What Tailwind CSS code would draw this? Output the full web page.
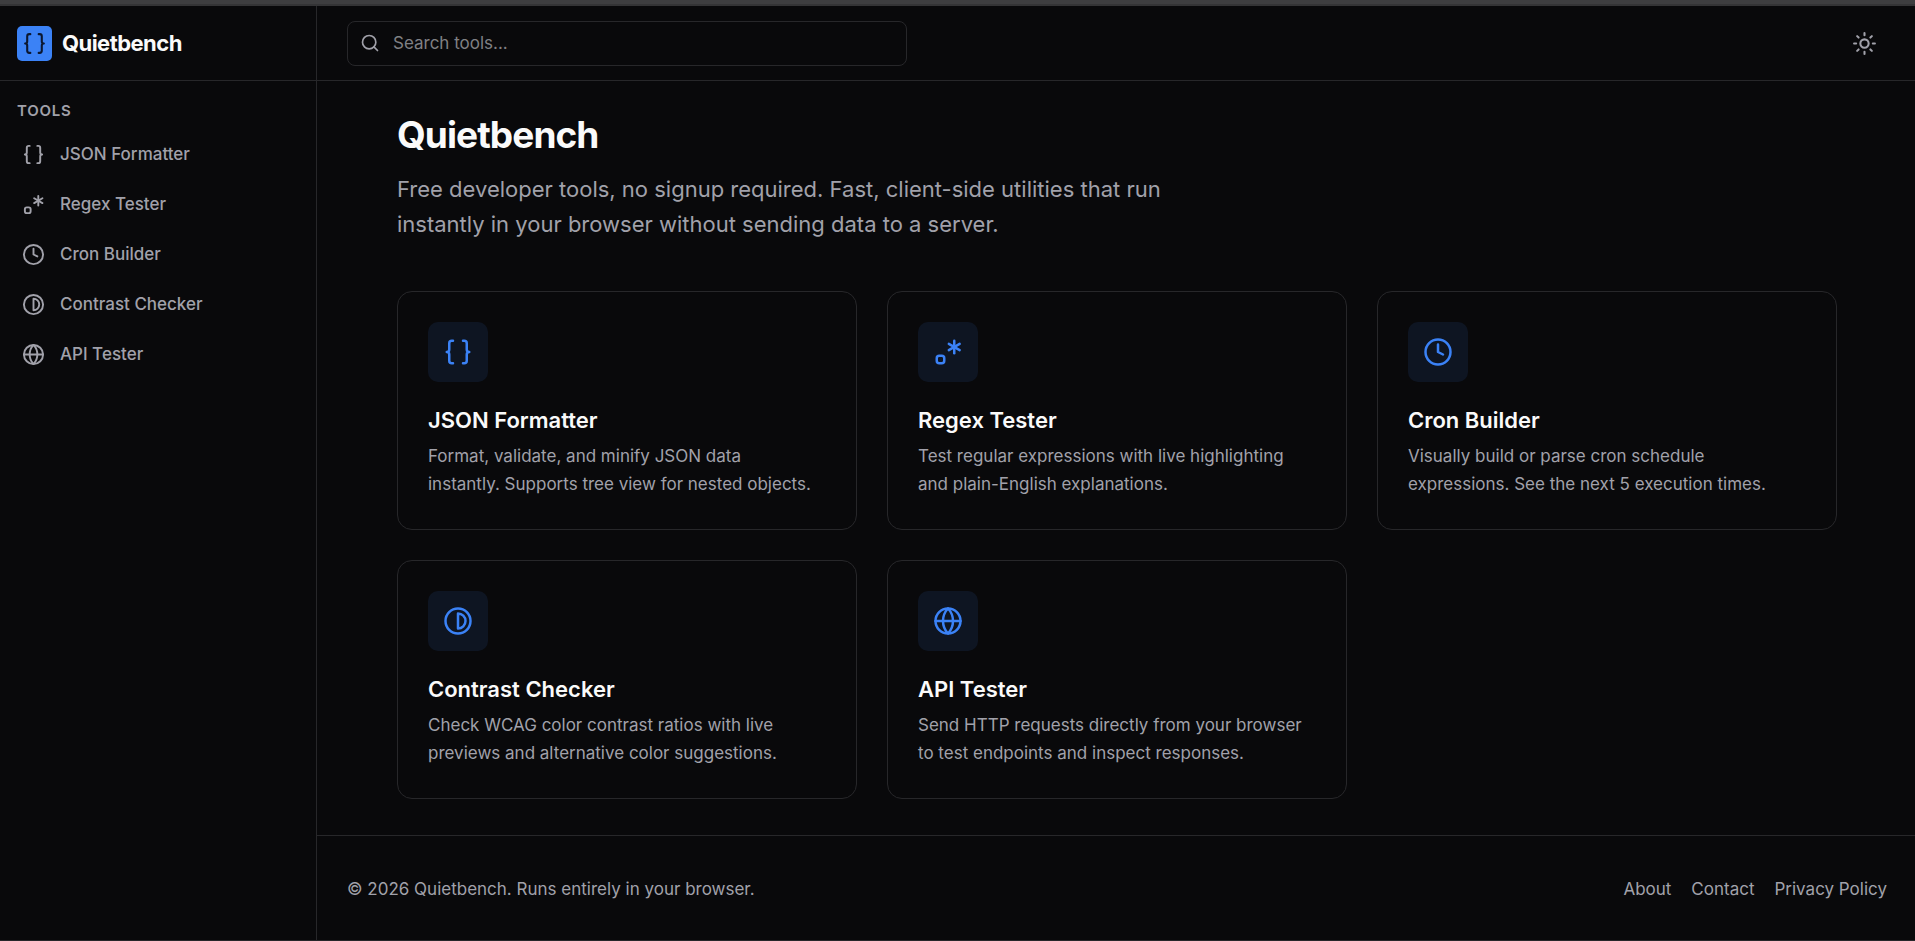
<!DOCTYPE html>
<html lang="en">
<head>
    <meta charset="UTF-8">
    <meta name="viewport" content="width=device-width, initial-scale=1.0">
    <title>Quietbench</title>
    <script src="https://cdn.jsdelivr.net/npm/@tailwindcss/browser@4"></script>
</head>
<body class="min-h-screen flex flex-col bg-[#09090b] text-[#fafafa] text-[17px] leading-[28px] font-['Inter',sans-serif] border-b border-[#27272a]">
    <!-- Icon sprite -->
    <svg class="hidden" fill="none">
        <symbol id="braces" viewBox="0 0 24 24">
            <path d="M8 3H7a2 2 0 0 0-2 2v5a2 2 0 0 1-2 2 2 2 0 0 1 2 2v5c0 1.1.9 2 2 2h1"/>
            <path d="M16 21h1a2 2 0 0 0 2-2v-5c0-1.1.9-2 2-2a2 2 0 0 1-2-2V5a2 2 0 0 0-2-2h-1"/>
        </symbol>
        <symbol id="regex" viewBox="0 0 24 24">
            <path d="M17 3v10"/>
            <path d="m12.67 5.5 8.66 5"/>
            <path d="m12.67 10.5 8.66-5"/>
            <path d="M9 17a2 2 0 0 0-2-2H5a2 2 0 0 0-2 2v2a2 2 0 0 0 2 2h2a2 2 0 0 0 2-2v-2z"/>
        </symbol>
        <symbol id="clock" viewBox="0 0 24 24">
            <circle cx="12" cy="12" r="10"/>
            <path d="M12 6v6l4 2"/>
        </symbol>
        <symbol id="contrast" viewBox="0 0 24 24">
            <circle cx="12" cy="12" r="10"/>
            <path d="M12 18a6 6 0 0 0 0-12v12z"/>
        </symbol>
        <symbol id="globe" viewBox="0 0 24 24">
            <circle cx="12" cy="12" r="10"/>
            <path d="M12 2a14.5 14.5 0 0 0 0 20 14.5 14.5 0 0 0 0-20"/>
            <path d="M2 12h20"/>
        </symbol>
        <symbol id="search" viewBox="0 0 24 24">
            <circle cx="11" cy="11" r="8"/>
            <path d="m21 21-4.3-4.3"/>
        </symbol>
        <symbol id="sun" viewBox="0 0 24 24">
            <circle cx="12" cy="12" r="4"/>
            <path d="M12 2v2"/>
            <path d="M12 20v2"/>
            <path d="m4.93 4.93 1.41 1.41"/>
            <path d="m17.66 17.66 1.41 1.41"/>
            <path d="M2 12h2"/>
            <path d="M20 12h2"/>
            <path d="m6.34 17.66-1.41 1.41"/>
            <path d="m19.07 4.93-1.41 1.41"/>
        </symbol>
    </svg>

    <!-- Window edge -->
    <div class="h-[6px] shrink-0 bg-[#3e3e40] border-b-2 border-[#343436]"></div>

    <div class="flex flex-1">
        <!-- Sidebar -->
        <aside class="w-[317px] shrink-0 border-r border-[#27272a]">
            <div class="h-[75px] border-b border-[#27272a] px-[17px] flex items-center">
                <a href="#" class="flex items-center gap-[10px]">
                    <span class="size-[35px] rounded-[5px] bg-[#3b82f6] text-[#0b1730] flex items-center justify-center">
                        <svg class="size-[25px]" fill="none" stroke="currentColor" stroke-width="2" stroke-linecap="round" stroke-linejoin="round"><use href="#braces"/></svg>
                    </span>
                    <span class="text-[22px] font-bold tracking-tight">Quietbench</span>
                </a>
            </div>
            <nav class="pt-[17px]">
                <h2 class="px-[17px] text-[15px] leading-[25px] font-semibold tracking-wider text-[#a1a1aa]">TOOLS</h2>
                <ul class="mt-[6px] px-[10px] font-medium text-[#a1a1aa]">
                    <li><a href="#json" class="h-[50px] px-3 flex items-center gap-[15px]"><svg class="size-[23px]" fill="none" stroke="currentColor" stroke-width="2" stroke-linecap="round" stroke-linejoin="round"><use href="#braces"/></svg>JSON Formatter</a></li>
                    <li><a href="#regex-tester" class="h-[50px] px-3 flex items-center gap-[15px]"><svg class="size-[23px]" fill="none" stroke="currentColor" stroke-width="2" stroke-linecap="round" stroke-linejoin="round"><use href="#regex"/></svg>Regex Tester</a></li>
                    <li><a href="#cron" class="h-[50px] px-3 flex items-center gap-[15px]"><svg class="size-[23px]" fill="none" stroke="currentColor" stroke-width="2" stroke-linecap="round" stroke-linejoin="round"><use href="#clock"/></svg>Cron Builder</a></li>
                    <li><a href="#contrast-checker" class="h-[50px] px-3 flex items-center gap-[15px]"><svg class="size-[23px]" fill="none" stroke="currentColor" stroke-width="2" stroke-linecap="round" stroke-linejoin="round"><use href="#contrast"/></svg>Contrast Checker</a></li>
                    <li><a href="#api" class="h-[50px] px-3 flex items-center gap-[15px]"><svg class="size-[23px]" fill="none" stroke="currentColor" stroke-width="2" stroke-linecap="round" stroke-linejoin="round"><use href="#globe"/></svg>API Tester</a></li>
                </ul>
            </nav>
        </aside>

        <div class="flex-1 min-w-0 flex flex-col">
            <!-- Top bar -->
            <header class="h-[75px] border-b border-[#27272a] pl-[30px] pr-[28px] flex items-center justify-between gap-6">
                <label class="w-full max-w-[560px] h-[45px] border border-[#27272a] rounded-lg px-3 flex items-center gap-[13px]">
                    <svg class="size-[20px] shrink-0 text-[#a1a1aa]" fill="none" stroke="currentColor" stroke-width="2" stroke-linecap="round" stroke-linejoin="round"><use href="#search"/></svg>
                    <input type="search" aria-label="Search tools" placeholder="Search tools..." class="flex-1 min-w-0 bg-transparent outline-none placeholder:text-[#808084]">
                </label>
                <button type="button" aria-label="Toggle theme" class="size-[45px] rounded-lg text-[#a1a1aa] flex items-center justify-center">
                    <svg class="size-[25px]" fill="none" stroke="currentColor" stroke-width="2" stroke-linecap="round" stroke-linejoin="round"><use href="#sun"/></svg>
                </button>
            </header>

            <main class="flex-1 pt-[31px] pb-9 pl-20 pr-[78px]">
                <h1 class="text-[37px] leading-[45px] font-bold tracking-tight">Quietbench</h1>
                <p class="mt-[15px] mb-[49px] max-w-[840px] text-[22px] leading-[35px] text-[#a1a1aa]">Free developer tools, no signup required. Fast, client-side utilities that run instantly in your browser without sending data to a server.</p>

                <!-- Tool cards -->
                <div class="grid grid-cols-3 gap-[30px]">
                    <a href="#json" class="border border-[#27272a] rounded-[15px] p-[30px] pb-[31px]">
                        <span class="size-[60px] rounded-[10px] bg-[#3b82f6]/10 text-[#3b82f6] flex items-center justify-center">
                            <svg class="size-[30px]" fill="none" stroke="currentColor" stroke-width="2" stroke-linecap="round" stroke-linejoin="round"><use href="#braces"/></svg>
                        </span>
                        <h3 class="mt-[21px] text-[22px] leading-[35px] font-semibold">JSON Formatter</h3>
                        <p class="mt-1 text-[#a1a1aa]">Format, validate, and minify JSON data<br>instantly. Supports tree view for nested objects.</p>
                    </a>
                    <a href="#regex-tester" class="border border-[#27272a] rounded-[15px] p-[30px] pb-[31px]">
                        <span class="size-[60px] rounded-[10px] bg-[#3b82f6]/10 text-[#3b82f6] flex items-center justify-center">
                            <svg class="size-[30px]" fill="none" stroke="currentColor" stroke-width="2" stroke-linecap="round" stroke-linejoin="round"><use href="#regex"/></svg>
                        </span>
                        <h3 class="mt-[21px] text-[22px] leading-[35px] font-semibold">Regex Tester</h3>
                        <p class="mt-1 text-[#a1a1aa]">Test regular expressions with live highlighting and plain-English explanations.</p>
                    </a>
                    <a href="#cron" class="border border-[#27272a] rounded-[15px] p-[30px] pb-[31px]">
                        <span class="size-[60px] rounded-[10px] bg-[#3b82f6]/10 text-[#3b82f6] flex items-center justify-center">
                            <svg class="size-[30px]" fill="none" stroke="currentColor" stroke-width="2" stroke-linecap="round" stroke-linejoin="round"><use href="#clock"/></svg>
                        </span>
                        <h3 class="mt-[21px] text-[22px] leading-[35px] font-semibold">Cron Builder</h3>
                        <p class="mt-1 text-[#a1a1aa]">Visually build or parse cron schedule expressions. See the next 5 execution times.</p>
                    </a>
                    <a href="#contrast-checker" class="border border-[#27272a] rounded-[15px] p-[30px] pb-[31px]">
                        <span class="size-[60px] rounded-[10px] bg-[#3b82f6]/10 text-[#3b82f6] flex items-center justify-center">
                            <svg class="size-[30px]" fill="none" stroke="currentColor" stroke-width="2" stroke-linecap="round" stroke-linejoin="round"><use href="#contrast"/></svg>
                        </span>
                        <h3 class="mt-[21px] text-[22px] leading-[35px] font-semibold">Contrast Checker</h3>
                        <p class="mt-1 text-[#a1a1aa]">Check WCAG color contrast ratios with live previews and alternative color suggestions.</p>
                    </a>
                    <a href="#api" class="border border-[#27272a] rounded-[15px] p-[30px] pb-[31px]">
                        <span class="size-[60px] rounded-[10px] bg-[#3b82f6]/10 text-[#3b82f6] flex items-center justify-center">
                            <svg class="size-[30px]" fill="none" stroke="currentColor" stroke-width="2" stroke-linecap="round" stroke-linejoin="round"><use href="#globe"/></svg>
                        </span>
                        <h3 class="mt-[21px] text-[22px] leading-[35px] font-semibold">API Tester</h3>
                        <p class="mt-1 text-[#a1a1aa]">Send HTTP requests directly from your browser to test endpoints and inspect responses.</p>
                    </a>
                </div>
            </main>

            <footer class="h-[105px] border-t border-[#27272a] pt-0.5 pl-[30px] pr-[28px] flex items-center justify-between text-[#a1a1aa]">
                <p>© 2026 Quietbench. Runs entirely in your browser.</p>
                <nav class="flex gap-5">
                    <a href="#about">About</a>
                    <a href="#contact">Contact</a>
                    <a href="#privacy">Privacy Policy</a>
                </nav>
            </footer>
        </div>
    </div>
</body>
</html>
